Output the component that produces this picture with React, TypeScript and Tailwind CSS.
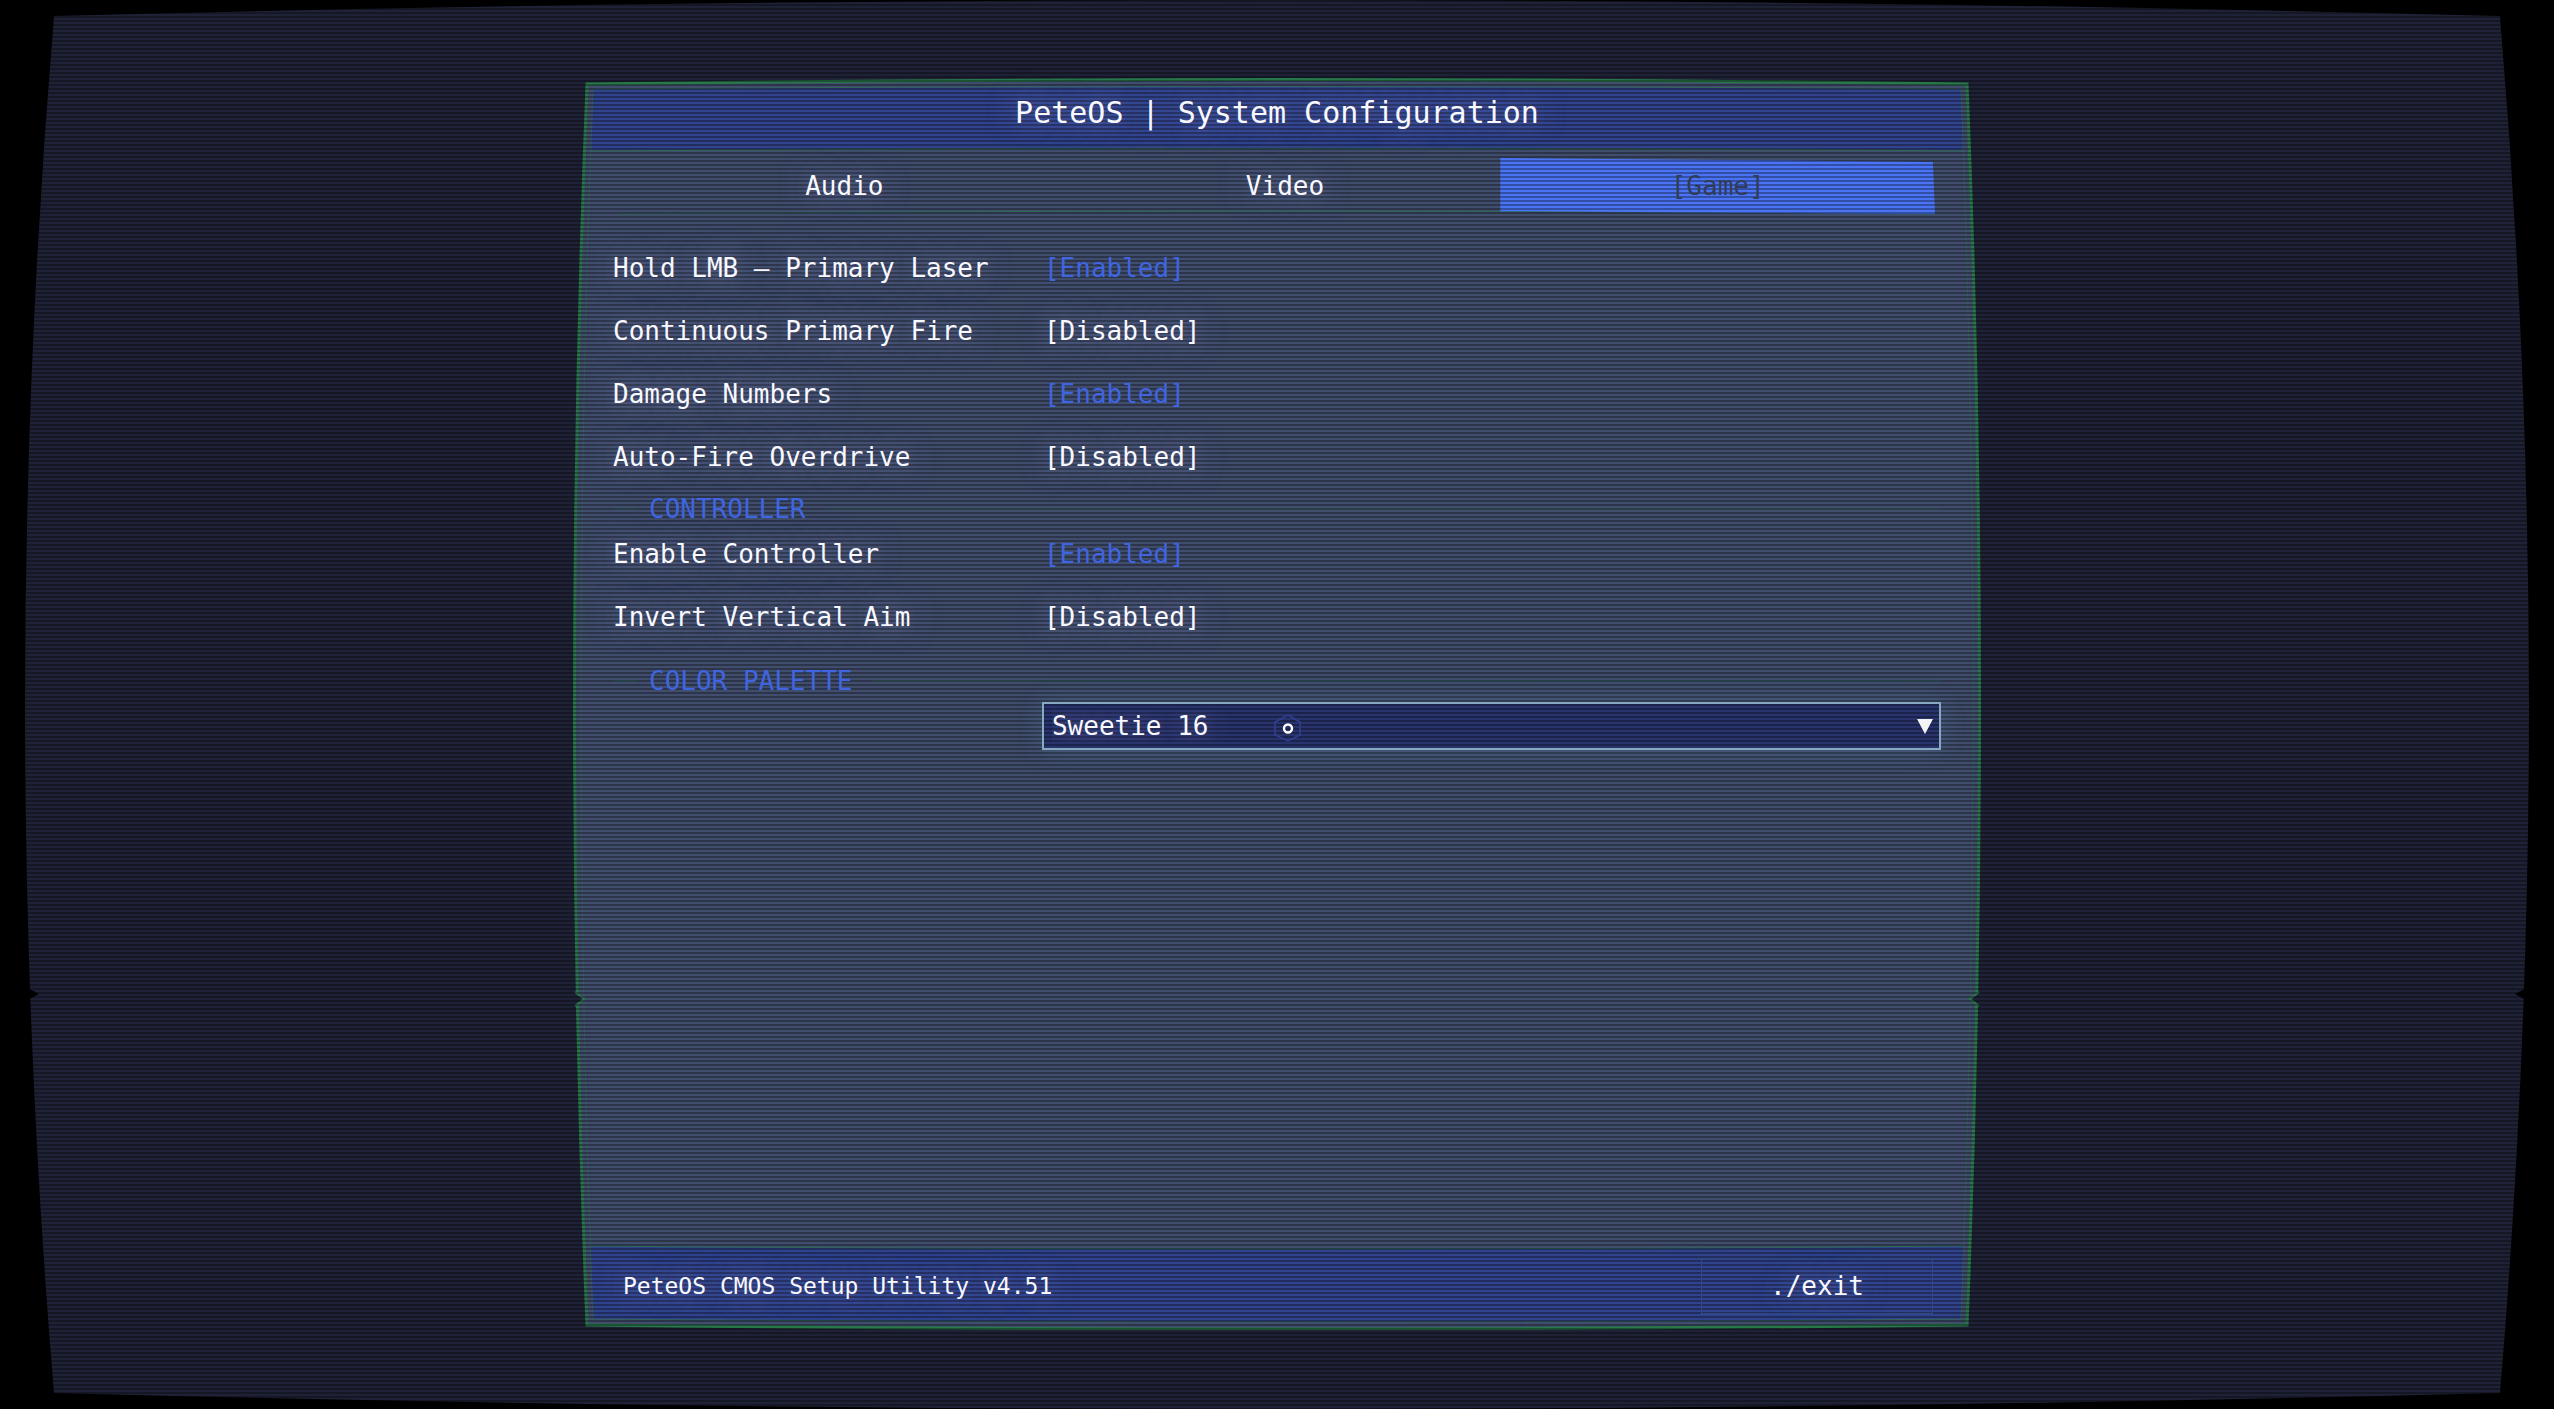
import { useState } from 'react';

const TABS = ['Audio', 'Video', 'Game'];
const PALETTES = ['Sweetie 16', 'PICO-8', 'Game Boy'];

const scanlines =
  'bg-[repeating-linear-gradient(to_bottom,rgba(0,0,0,0.32)_0px,rgba(0,0,0,0.32)_2px,transparent_2px,transparent_4px)] bg-fixed';

const glow = '[text-shadow:0_0_28px_rgba(190,190,255,0.55)]';

// Curved glass of the monitor, black outside
function ScreenShape() {
  return (
    <svg
      className="absolute inset-0 w-full h-full"
      viewBox="0 0 2554 1409"
      preserveAspectRatio="none"
      aria-hidden="true"
    >
      <path
        d="M54 16 Q1277 -16 2500 16 Q2558 704 2500 1393 Q1277 1425 54 1393 Q-4 704 54 16Z"
        fill="#1f2236"
      />
      <path d="M26 987 L39 994 L26 1001Z M2528 987 L2515 994 L2528 1001Z" fill="#000" />
    </svg>
  );
}

function PanelFrame() {
  return (
    <svg
      className="absolute inset-0 w-full h-full"
      viewBox="0 0 1408 1252"
      preserveAspectRatio="none"
      fill="none"
      aria-hidden="true"
    >
      <path
        d="M14 6 Q704 -3 1394 6 Q1419 627 1394 1247 Q704 1255 14 1247 Q-11 627 14 6Z"
        fill="#404d6c"
        stroke="#27794a"
        strokeWidth="3"
      />
      <path d="M20 11 Q704 6 1388 11 L1391 72 Q704 67 17 72Z" fill="#30438c" />
      <path d="M17 1168 Q704 1174 1391 1168 L1388 1241 Q704 1247 20 1241Z" fill="#30438c" />
      <path
        d="M20 11 Q704 6 1388 11 Q1412 627 1388 1241 Q704 1247 20 1241 Q-4 627 20 11Z"
        stroke="#35665c"
      />
      <g stroke="#2d6b55">
        <path d="M17 73 Q704 68 1391 73" />
        <path d="M46 136 Q704 130 1361 136" />
        <path d="M17 1168 Q704 1174 1391 1168" />
      </g>
      <path d="M0 914 L11 921 L0 928Z M1408 914 L1397 921 L1408 928Z" fill="#1f2236" />
      <path d="M2 914 L11 921 L2 928 M1406 914 L1397 921 L1406 928" stroke="#27794a" strokeWidth="2" />
    </svg>
  );
}

function ToggleRow({ label, initial }: { label: string; initial: boolean }) {
  const [on, setOn] = useState(initial);

  return (
    <div className="grid grid-cols-[32.3%_1fr] items-center h-[63px]">
      <span className={glow}>{label}</span>
      <button
        type="button"
        aria-label={label}
        aria-pressed={on}
        onClick={() => setOn(!on)}
        className={`justify-self-start pl-0.5 ${on ? 'text-[#3f65e0]' : `text-[#f8f8ff] ${glow}`}`}
      >
        {on ? '[Enabled]' : '[Disabled]'}
      </button>
    </div>
  );
}

function SectionTitle({ children }: { children: string }) {
  return (
    <div className="flex items-center gap-3 h-[34px] pt-2">
      <span className={`w-6 h-0.5 bg-[#3a5c66] ${scanlines}`} />
      <h2 className="text-[#3f65e0]">{children}</h2>
      <span className={`flex-1 ml-2 h-0.5 bg-[#3a5c66] ${scanlines}`} />
    </div>
  );
}

function Cursor() {
  return (
    <svg
      className="absolute left-[27%] top-1/2 -translate-x-1/2 -translate-y-1/2 w-8 h-8 pointer-events-none"
      viewBox="0 0 32 32"
      fill="none"
      aria-hidden="true"
    >
      <path d="M19 5 L31 12 V25 L19 31 L6 25 V12Z" stroke="#303f92" strokeWidth="1.5" />
      <circle cx="19" cy="18.5" r="4" stroke="#fff" strokeWidth="2.4" />
    </svg>
  );
}

function App() {
  const [tab, setTab] = useState('Game');
  const [palette, setPalette] = useState(PALETTES[0]);

  return (
    <main className="relative flex flex-col items-center min-h-screen overflow-hidden bg-black pt-[78px] pb-[79px] font-['DejaVu_Sans_Mono',monospace] text-[26px] leading-8 text-[#f8f8ff]">
      <ScreenShape />

      <section className="relative flex flex-col flex-1 w-[55.13%]">
        <PanelFrame />

        <div className="relative z-20 flex flex-col flex-1 px-10 py-2">
          <header className="flex items-center justify-center h-[54px]">
            <h1 className={`text-[30px] ${glow}`}>PeteOS | System Configuration</h1>
          </header>

          <nav className="grid grid-cols-3 gap-1.5 px-1.5 mt-[18px]">
            {TABS.map((name) => {
              const active = tab === name;
              return (
                <button
                  key={name}
                  type="button"
                  onClick={() => setTab(name)}
                  className={`h-14 ${
                    active
                      ? `bg-[#4a74f5] text-[#333c57] [clip-path:polygon(0_0,99.5%_7%,100%_100%,0_95%)] ${scanlines}`
                      : `pl-4 ${glow}`
                  }`}
                >
                  {active ? `[${name}]` : name}
                </button>
              );
            })}
          </nav>

          <div className="flex flex-col mt-[22px]">
            <ToggleRow label="Hold LMB — Primary Laser" initial={true} />
            <ToggleRow label="Continuous Primary Fire" initial={false} />
            <ToggleRow label="Damage Numbers" initial={true} />
            <ToggleRow label="Auto-Fire Overdrive" initial={false} />

            <SectionTitle>CONTROLLER</SectionTitle>
            <ToggleRow label="Enable Controller" initial={true} />
            <ToggleRow label="Invert Vertical Aim" initial={false} />

            <div className="mt-3">
              <SectionTitle>COLOR PALETTE</SectionTitle>
            </div>
            <div className="grid grid-cols-[32.3%_1fr] mt-2">
              <div className="relative col-start-2">
                <select
                  aria-label="Color palette"
                  value={palette}
                  onChange={(e) => setPalette(e.target.value)}
                  className={`block w-full h-12 pl-2 pr-10 appearance-none outline-none border-2 border-[#86a9c0] bg-[#29346e] shadow-[0_0_28px_rgba(115,200,240,0.14)] ${glow} ${scanlines}`}
                >
                  {PALETTES.map((p) => (
                    <option key={p}>{p}</option>
                  ))}
                </select>
                <svg
                  className="absolute right-2 top-1/2 -translate-y-1/2 w-4 h-4 pointer-events-none"
                  viewBox="0 0 16 16"
                  aria-hidden="true"
                >
                  <path d="M0 1 H16 L8 16Z" fill="#f4f4f4" />
                </svg>
                <Cursor />
              </div>
            </div>
          </div>

          <footer className="flex items-center justify-between mt-auto h-[72px] pl-2.5 pr-2">
            <span className={`text-[23px] ${glow}`}>PeteOS CMOS Setup Utility v4.51</span>
            <button
              type="button"
              className={`w-[232px] h-14 border border-[#2e4a80] ${glow}`}
            >
              ./exit
            </button>
          </footer>
        </div>
      </section>

      <div className={`absolute inset-0 z-10 pointer-events-none ${scanlines}`} />
    </main>
  );
}

export default App;
